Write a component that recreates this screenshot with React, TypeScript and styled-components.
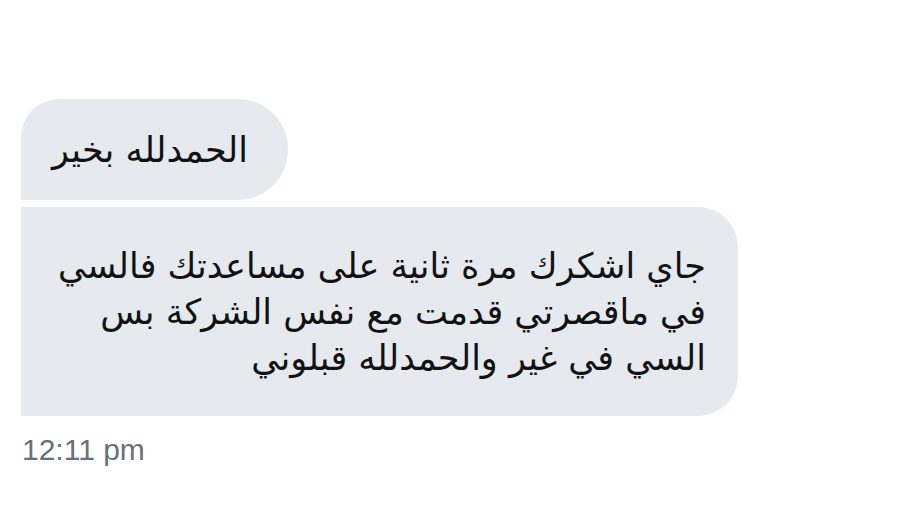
import React from "react";
import styled, { createGlobalStyle } from "styled-components";

const Global = createGlobalStyle`
  html, body { margin: 0; padding: 0; background: #ffffff; }
  body { font-family: "DejaVu Sans", "Noto Sans", sans-serif; }
`;

const Page = styled.div`
  width: 906px;
  height: 509px;
  box-sizing: border-box;
  padding: 99px 0 0 21px;
  display: flex;
  flex-direction: column;
  align-items: flex-start;
  background: #ffffff;
`;

const Thread = styled.div`
  display: flex;
  flex-direction: column;
  align-items: flex-start;
  gap: 7px;
`;

const Bubble = styled.div<{ $w: number; $h: number; $radius: string; $pr: number }>`
  box-sizing: border-box;
  width: ${(p) => p.$w}px;
  height: ${(p) => p.$h}px;
  background: #e6e9ee;
  border-radius: ${(p) => p.$radius};
  padding-right: ${(p) => p.$pr}px;
  display: flex;
  flex-direction: column;
  justify-content: center;
  align-items: stretch;
  direction: rtl;
  text-align: right;
  color: #111214;
  font-family: "DejaVu Sans", sans-serif;
  font-size: 35px;
  line-height: 46px;
`;

const Line = styled.div`
  white-space: nowrap;
`;

const Time = styled.div`
  margin-top: 17px;
  margin-left: 1px;
  font-family: "Liberation Sans", Arial, sans-serif;
  font-size: 30px;
  line-height: 34px;
  color: #68717b;
`;

export default function App() {
  return (
    <>
      <Global />
      <Page>
        <Thread>
          <Bubble $w={267} $h={101} $radius="38px 50px 50px 0" $pr={40}>
            <Line>الحمدلله بخير</Line>
          </Bubble>
          <Bubble $w={717} $h={209} $radius="0 40px 40px 0" $pr={32}>
            <Line>جاي اشكرك مرة ثانية على مساعدتك فالسي</Line>
            <Line>في ماقصرتي قدمت مع نفس الشركة بس</Line>
            <Line>السي في غير والحمدلله قبلوني</Line>
          </Bubble>
        </Thread>
        <Time>12:11 pm</Time>
      </Page>
    </>
  );
}
